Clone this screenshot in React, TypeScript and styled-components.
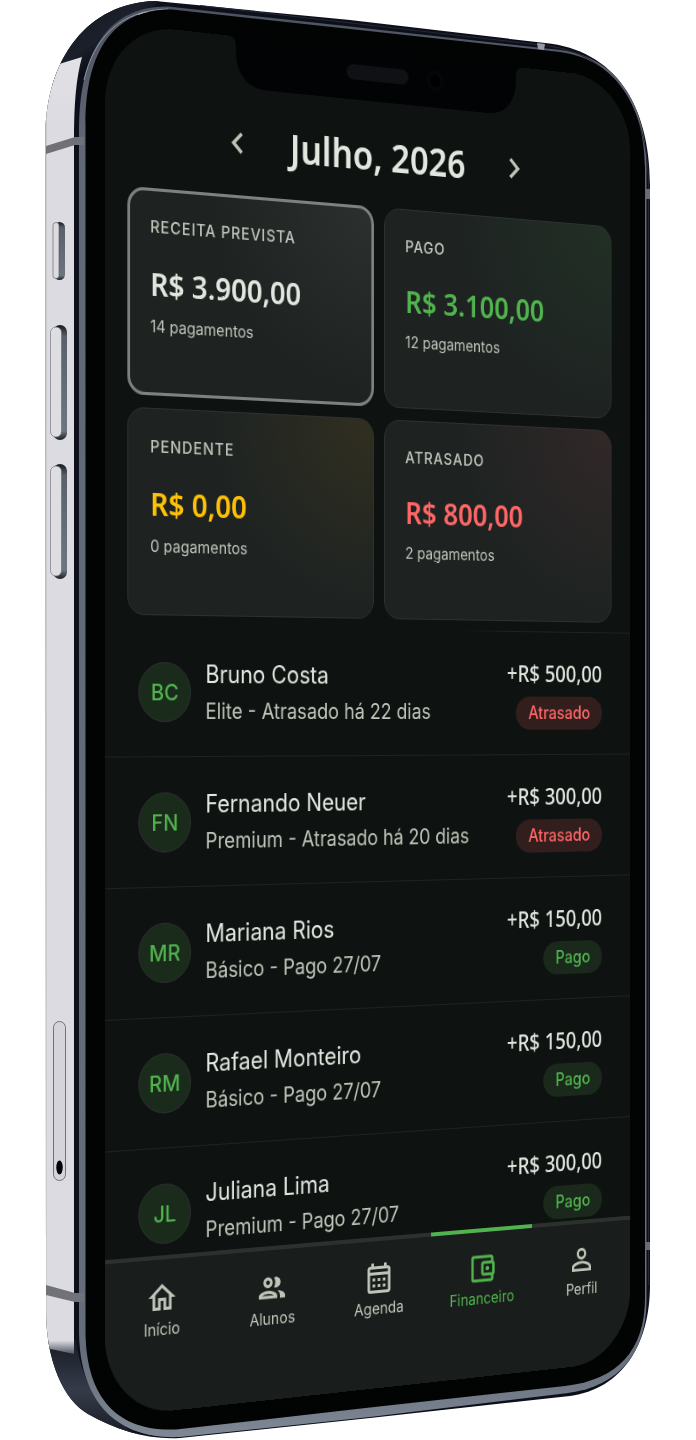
import React, { useState } from "react";
import styled, { createGlobalStyle } from "styled-components";
import {
  MdChevronLeft,
  MdChevronRight,
  MdOutlineAccountBalanceWallet,
  MdOutlineCalendarMonth,
  MdOutlineGroup,
  MdOutlineHome,
  MdPersonOutline,
} from "react-icons/md";

const color = {
  screen: "#0e1311",
  nav: "#191d1b",
  card: "#1e2322",
  line: "#1e2321",
  navLine: "#2c312e",
  text: "#e1e7df",
  muted: "#bec4b8",
  green: "#50b34e",
  yellow: "#ffc107",
  red: "#ff6666",
};

const textFont = `Inter, "Liberation Sans", sans-serif`;
const displayFont = `"Noto Sans", "Open Sans", sans-serif`;

const GlobalStyle = createGlobalStyle`
  * { box-sizing: border-box; }
  body { margin: 0; background: #ffffff; font-family: ${textFont}; }
  button { font: inherit; color: inherit; }
`;

const Stage = styled.div`
  position: relative;
  max-width: 696px;
  margin: 0 auto;
  padding: 52px 8px 52px 70px;
  overflow: hidden;
`;

const Body = styled.svg`
  position: absolute;
  inset: 0;
  width: 100%;
  height: 100%;
`;

const Screen = styled.div`
  position: relative;
  display: flex;
  flex-direction: column;
  width: 100%;
  aspect-ratio: 618 / 1336;
  overflow: hidden;
  border-radius: 76px;
  background: ${color.screen};
  color: ${color.text};
  transform: perspective(3815px) rotateY(32deg);
`;

const NotchShape = styled.svg`
  position: absolute;
  top: 0;
  left: 50%;
  width: 348px;
  height: 50px;
  transform: translateX(-50%);
`;

const Main = styled.main`
  flex: 1;
  min-height: 0;
  overflow: hidden;
  padding-top: 72px;
`;

const MonthBar = styled.header`
  display: flex;
  align-items: center;
  justify-content: center;
  gap: 38px;
  height: 64px;
  margin-bottom: 19px;
`;

const MonthTitle = styled.h1`
  margin: 0;
  font: 600 39px/56px ${displayFont};
`;

const MonthButton = styled.button`
  display: flex;
  padding: 0;
  border: 0;
  background: none;
  color: ${color.muted};
  font-size: 42px;
`;

const Cards = styled.section`
  display: grid;
  grid-template-columns: 1fr 1fr;
  gap: 12px;
  padding: 0 24px;
  margin-bottom: 10px;
`;

const Card = styled.button<{ $glow: string; $selected: boolean }>`
  display: flex;
  flex-direction: column;
  align-items: flex-start;
  height: 200px;
  padding: ${(p) => (p.$selected ? "22px" : "24px")};
  border: ${(p) => (p.$selected ? "3px solid #7d827f" : "1px solid #2d3230")};
  border-radius: 18px;
  background: radial-gradient(circle at 100% 0, ${(p) => p.$glow}, transparent 55%) border-box,
    ${color.card};
  text-align: left;
`;

const CardLabel = styled.span`
  margin-bottom: 22px;
  color: ${color.muted};
  font: 500 16px/24px ${textFont};
  letter-spacing: 1px;
`;

const CardValue = styled.strong<{ $tone: string }>`
  margin-bottom: 8px;
  color: ${(p) => p.$tone};
  font: 600 31px/42px ${displayFont};
`;

const CardNote = styled.span`
  color: ${color.muted};
  font: 400 16px/24px ${textFont};
`;

const Payments = styled.ul`
  margin: 0;
  padding: 0;
  list-style: none;
`;

const Payment = styled.li`
  display: flex;
  align-items: center;
  gap: 16px;
  height: 126px;
  padding: 0 36px;
  border-top: 1px solid ${color.line};

  &:first-child {
    border-image: linear-gradient(90deg, transparent 65%, #10291f 75%, ${color.line} 90%) 1;
  }
`;

const Avatar = styled.span`
  display: flex;
  align-items: center;
  justify-content: center;
  flex: none;
  width: 58px;
  height: 58px;
  border: 1px solid #2d3230;
  border-radius: 50%;
  background: #1a2a1b;
  color: ${color.green};
  font: 500 22px/32px ${textFont};
`;

const Who = styled.div`
  flex: 1;
  min-width: 0;
  padding-top: 2px;
`;

const Name = styled.div`
  font: 400 24px/36px ${textFont};
`;

const Detail = styled.div`
  color: ${color.muted};
  font: 400 21px/36px ${textFont};
  white-space: nowrap;
`;

const Sum = styled.div`
  display: flex;
  flex-direction: column;
  align-items: flex-end;
  gap: 8px;
`;

const Amount = styled.div`
  font: 500 23px/32px ${displayFont};
`;

const Badge = styled.span<{ $late: boolean }>`
  padding: 0 15px;
  border-radius: 17px;
  background: ${(p) => (p.$late ? "#331e1e" : "#1a291b")};
  color: ${(p) => (p.$late ? color.red : color.green)};
  font: 500 18px/34px ${textFont};
`;

const Nav = styled.nav`
  display: grid;
  grid-template-columns: repeat(5, 1fr);
  flex: none;
  height: 151px;
  background: ${color.nav};
`;

const NavLink = styled.a<{ $active: boolean }>`
  display: flex;
  flex-direction: column;
  align-items: center;
  padding-top: 19px;
  border-top: 4px solid ${(p) => (p.$active ? color.green : color.navLine)};
  color: ${(p) => (p.$active ? color.green : color.muted)};
  font: 400 16px/24px ${textFont};
  text-decoration: none;

  svg { font-size: 36px; }
`;

function PhoneBody() {
  return (
    <Body viewBox="0 0 696 1440" preserveAspectRatio="none" aria-hidden="true">
      <defs>
        <clipPath id="silhouette">
          <path d="M45.500 135C46 58 88 3 155 1L350 20L545 43C615 50 650 105 650 185V1285C650 1345 622 1389 570 1396L370 1418L180 1438C150 1440 118 1431 88 1414C64 1400 46 1362 46 1310Z" />
        </clipPath>
        <linearGradient id="rim" x1="0" y1="0" x2="0" y2="1">
          <stop offset="0" stopColor="#4c525e" />
          <stop offset=".1" stopColor="#616875" />
          <stop offset=".94" stopColor="#666d7a" />
          <stop offset="1" stopColor="#7f8895" />
        </linearGradient>
        <linearGradient id="cap" x1="0" y1="0" x2="1" y2="1">
          <stop offset="0" stopColor="#10131d" />
          <stop offset=".45" stopColor="#1b202b" />
          <stop offset=".6" stopColor="#0b0e17" />
          <stop offset="1" stopColor="#171b26" />
        </linearGradient>
        <linearGradient id="side" gradientUnits="userSpaceOnUse" x1="0" y1="57" x2="0" y2="1356">
          <stop offset="0" stopColor="#e2e1e6" />
          <stop offset=".05" stopColor="#dcdbe1" />
          <stop offset=".988" stopColor="#dcdbe1" />
          <stop offset="1" stopColor="#3a3f4b" />
        </linearGradient>
        <linearGradient id="foot" x1="0" y1="0" x2="0" y2="1">
          <stop offset="0" stopColor="#171b25" />
          <stop offset=".5" stopColor="#353c49" />
          <stop offset="1" stopColor="#141821" />
        </linearGradient>
        <linearGradient id="keyEdge" x1="0" y1="0" x2="0" y2="1">
          <stop offset="0" stopColor="#161920" />
          <stop offset=".1" stopColor="#596069" />
          <stop offset=".92" stopColor="#6d7680" />
          <stop offset="1" stopColor="#1b1f28" />
        </linearGradient>
      </defs>
      <g clipPath="url(#silhouette)">
        <rect width="696" height="1440" fill="#0d101a" />
        <path d="M40 0H160L85 75L40 90Z" fill="url(#cap)" />
        <path d="M40 1340H76C82 1390 110 1425 150 1440H40Z" fill="url(#foot)" />
        <path d="M40 70L56 65L82 57C76 78 74 105 74 140V1354L46 1348H40Z" fill="url(#side)" />
        <path d="M45 75H46.500V1345H45Z" fill="#b9bac0" />
      </g>
      <path d="M79 130C79 52 108 6 168 6.500L350 26.500L560 50C621 57.500 646.500 110 646.500 168V1300C646.500 1352 620 1386 568 1393L370 1417L180 1437C115 1440 79 1400 79 1330Z" fill="url(#rim)" />
      <path d="M84 80C94 38 120 10 168 9" fill="none" stroke="#8b93a0" strokeWidth="1" />
      <path d="M138 15C142 13 145 12.500 149 12.500" fill="none" stroke="#d8dade" strokeWidth="1" />
      <path d="M200 5.500L545 45.500C612 53 648 108 648.500 185V1285" fill="none" stroke="#252733" strokeWidth="1" />
      <path d="M85.500 125C85.500 50 114 9 172 9.500L350 29L560 52C620 60 645 112 645 168V1298C645 1350 618 1380 565 1386L370 1407.500L176 1429.500C115 1432 85.500 1395 85.500 1330Z" fill="#020303" />
      <path d="M46 146L75 137H84V145H75L46 154Z" fill="#707176" />
      <path d="M46 1285L75 1293H84V1302H75L46 1295Z" fill="#707278" />
      <path d="M537 43L545 44L544 50L538 49Z" fill="#9a9ba1" />
      <path d="M646 189H650V199H646ZM646 1242H650V1250H646Z" fill="#686c76" />

      <rect x="54" y="222" width="11" height="58" rx="5.500" fill="url(#keyEdge)" />
      <rect x="53" y="222.500" width="6" height="56" rx="3" fill="#dddce1" stroke="#55575e" strokeWidth=".6" />
      <rect x="53" y="325" width="14" height="115" rx="7" fill="url(#keyEdge)" />
      <rect x="50.500" y="327" width="11" height="110" rx="5.500" fill="#dedee2" stroke="#66686e" strokeWidth=".6" />
      <rect x="53" y="464" width="14" height="115" rx="7" fill="url(#keyEdge)" />
      <rect x="50.500" y="466" width="11" height="110" rx="5.500" fill="#dedee2" stroke="#66686e" strokeWidth=".6" />
      <rect x="53.500" y="1021.500" width="12" height="159" rx="6" fill="#d5d4da" stroke="#717177" strokeWidth="1" />
      <ellipse cx="59.500" cy="1167.500" rx="3.200" ry="7" fill="#020203" />
    </Body>
  );
}

function Notch() {
  return (
    <NotchShape viewBox="0 0 348 50" aria-hidden="true">
      <path d="M0 0C7 0 9 3 9 10V14C9 36 22 50 44 50H304C326 50 339 36 339 14V10C339 3 341 0 348 0Z" fill="#020304" />
      <rect x="136" y="15" width="73" height="15" rx="7.500" fill="#101114" />
      <circle cx="241" cy="23" r="11" fill="#05060a" />
      <circle cx="241" cy="23" r="6" fill="#000001" />
    </NotchShape>
  );
}

const cards = [
  { label: "RECEITA PREVISTA", value: "R$ 3.900,00", note: "14 pagamentos", tone: color.text, glow: "#2c3130" },
  { label: "PAGO", value: "R$ 3.100,00", note: "12 pagamentos", tone: color.green, glow: "#223025" },
  { label: "PENDENTE", value: "R$ 0,00", note: "0 pagamentos", tone: color.yellow, glow: "#312f20" },
  { label: "ATRASADO", value: "R$ 800,00", note: "2 pagamentos", tone: color.red, glow: "#322828" },
];

const payments = [
  { initials: "BC", name: "Bruno Costa", detail: "Elite - Atrasado há 22 dias", amount: "+R$ 500,00", status: "Atrasado" },
  { initials: "FN", name: "Fernando Neuer", detail: "Premium - Atrasado há 20 dias", amount: "+R$ 300,00", status: "Atrasado" },
  { initials: "MR", name: "Mariana Rios", detail: "Básico - Pago 27/07", amount: "+R$ 150,00", status: "Pago" },
  { initials: "RM", name: "Rafael Monteiro", detail: "Básico - Pago 27/07", amount: "+R$ 150,00", status: "Pago" },
  { initials: "JL", name: "Juliana Lima", detail: "Premium - Pago 27/07", amount: "+R$ 300,00", status: "Pago" },
];

const tabs = [
  { label: "Início", href: "#inicio", Icon: MdOutlineHome },
  { label: "Alunos", href: "#alunos", Icon: MdOutlineGroup },
  { label: "Agenda", href: "#agenda", Icon: MdOutlineCalendarMonth },
  { label: "Financeiro", href: "#financeiro", Icon: MdOutlineAccountBalanceWallet },
  { label: "Perfil", href: "#perfil", Icon: MdPersonOutline },
];

export default function App() {
  const [selected, setSelected] = useState(0);

  return (
    <>
      <GlobalStyle />
      <Stage>
        <PhoneBody />
        <Screen>
          <Main>
            <MonthBar>
              <MonthButton type="button" aria-label="Mês anterior">
                <MdChevronLeft />
              </MonthButton>
              <MonthTitle>Julho, 2026</MonthTitle>
              <MonthButton type="button" aria-label="Próximo mês">
                <MdChevronRight />
              </MonthButton>
            </MonthBar>
            <Cards>
              {cards.map((card, i) => (
                <Card
                  key={card.label}
                  type="button"
                  aria-pressed={i === selected}
                  $selected={i === selected}
                  $glow={card.glow}
                  onClick={() => setSelected(i)}
                >
                  <CardLabel>{card.label}</CardLabel>
                  <CardValue $tone={card.tone}>{card.value}</CardValue>
                  <CardNote>{card.note}</CardNote>
                </Card>
              ))}
            </Cards>
            <Payments>
              {payments.map((item) => (
                <Payment key={item.name}>
                  <Avatar>{item.initials}</Avatar>
                  <Who>
                    <Name>{item.name}</Name>
                    <Detail>{item.detail}</Detail>
                  </Who>
                  <Sum>
                    <Amount>{item.amount}</Amount>
                    <Badge $late={item.status === "Atrasado"}>{item.status}</Badge>
                  </Sum>
                </Payment>
              ))}
            </Payments>
          </Main>
          <Nav>
            {tabs.map(({ label, href, Icon }) => (
              <NavLink key={label} href={href} $active={label === "Financeiro"}>
                <Icon />
                {label}
              </NavLink>
            ))}
          </Nav>
          <Notch />
        </Screen>
      </Stage>
    </>
  );
}
